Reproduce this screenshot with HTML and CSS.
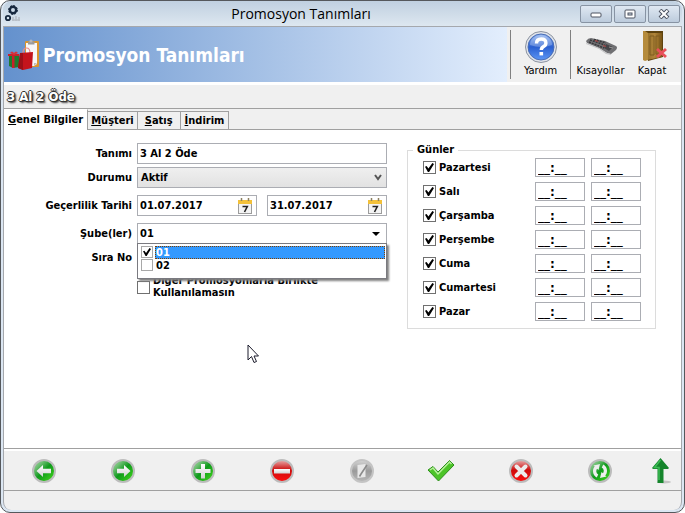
FILE: index.html
```html
<!DOCTYPE html>
<html lang="tr">
<head>
    <meta charset="UTF-8">
    <meta name="viewport" content="width=device-width, initial-scale=1.0">
    <title>Promosyon Tanımları</title>
    <link rel="stylesheet" href="styles.css">
</head>
<body>
    <svg class="defs" width="0" height="0" aria-hidden="true">
        <defs>
            <linearGradient id="green" x1="0" y1="0" x2="1" y2="1">
                <stop offset="0" stop-color="#b4dcb4"/>
                <stop offset="0.25" stop-color="#6fbf74"/>
                <stop offset="0.5" stop-color="#0f9a1c"/>
                <stop offset="1" stop-color="#4be01c"/>
            </linearGradient>
            <linearGradient id="red" x1="0" y1="0" x2="0" y2="1">
                <stop offset="0" stop-color="#e8b0b0"/>
                <stop offset="0.45" stop-color="#cc0c0c"/>
                <stop offset="1" stop-color="#ff1010"/>
            </linearGradient>
            <linearGradient id="gray" x1="0" y1="0" x2="0" y2="1">
                <stop offset="0" stop-color="#d6d6d6"/>
                <stop offset="0.5" stop-color="#9a9a9a"/>
                <stop offset="1" stop-color="#b8b8b8"/>
            </linearGradient>
            <linearGradient id="silver" x1="0" y1="0" x2="0" y2="1">
                <stop offset="0" stop-color="#ffffff"/>
                <stop offset="1" stop-color="#d2d2d2"/>
            </linearGradient>
            <linearGradient id="blue" x1="0" y1="0" x2="0" y2="1">
                <stop offset="0" stop-color="#8fb4f0"/>
                <stop offset="0.5" stop-color="#2a5fd0"/>
                <stop offset="1" stop-color="#5c96f5"/>
            </linearGradient>
            <linearGradient id="wood" x1="0" y1="0" x2="1" y2="0">
                <stop offset="0" stop-color="#94702c"/>
                <stop offset="0.5" stop-color="#b08438"/>
                <stop offset="1" stop-color="#7a5515"/>
            </linearGradient>
        </defs>
        <symbol id="calendar" viewBox="0 0 14 16">
            <rect x="0.5" y="2.5" width="13" height="13" fill="#f4f4f4" stroke="#9c9c9c"/>
            <rect x="0" y="2" width="14" height="4" fill="#f3c13a"/>
            <path d="M3.5 0v3M10.5 0v3" stroke="#8d8060" stroke-width="1.5"/>
            <path d="M4.500 8.500h4.800L6.500 14" fill="none" stroke="#222" stroke-width="1.6"/>
        </symbol>
    </svg>

    <div class="window">
        <header class="titlebar">
            <svg class="app-icon" width="18" height="18" viewBox="0 0 18 18">
                <circle cx="9" cy="5" r="3.2" fill="none" stroke="#17283e" stroke-width="2.4"/>
                <circle cx="9" cy="5" r="4.4" fill="none" stroke="#17283e" stroke-width="1" stroke-dasharray="2 1.4"/>
                <circle cx="4" cy="13" r="2.2" fill="none" stroke="#17283e" stroke-width="1.8"/>
                <path d="M8 15h8M9 12v4M12 11v5M15 12v4" stroke="#b8bfc8" stroke-width="1.6"/>
            </svg>
            <h1>Promosyon Tanımları</h1>
            <div class="window-buttons">
                <button type="button" aria-label="Simge durumuna küçült">
                    <svg width="12" height="10" viewBox="0 0 12 10"><rect x="1" y="4" width="10" height="4" rx="1" fill="#fff" stroke="#4c5260"/></svg>
                </button>
                <button type="button" aria-label="Ekranı kapla">
                    <svg width="12" height="10" viewBox="0 0 12 10"><rect x="1" y="1" width="10" height="8" rx="1" fill="#fff" stroke="#4c5260"/><rect x="4" y="4" width="4" height="2" fill="#cfdbe8" stroke="#4c5260"/></svg>
                </button>
                <button type="button" aria-label="Pencereyi kapat">
                    <svg width="12" height="10" viewBox="0 0 12 10"><path d="M2 1l8 8M10 1L2 9" stroke="#4c5260" stroke-width="4"/><path d="M2.5 1.5l7 7M9.5 1.5l-7 7" stroke="#fff" stroke-width="2"/></svg>
                </button>
            </div>
        </header>

        <div class="client">
            <div class="banner">
                <div class="banner-title">
                    <svg width="32" height="32" viewBox="0 0 32 32">
                        <rect x="17" y="2" width="14" height="26" rx="1" fill="#d9962f"/>
                        <path d="M18 4h11v21l-3 2h-8z" fill="#f7f7f7"/>
                        <path d="M26 27l3-3h-3z" fill="#bdbdbd"/>
                        <path d="M20 2.500h6.500v3h-6.500z" fill="#9a9a9a"/>
                        <circle cx="23" cy="2" r="1.6" fill="#b5b5b5"/>
                        <path d="M1 16l4-1 6 1v12l-6 1-4-2z" fill="#1f7a2e"/>
                        <path d="M0 15h11v2H0zM4 15h2.500v14H4z" fill="#c8202a"/>
                        <path d="M2 14q2-3 4 0q2-3 4 0l-4 2z" fill="#d8323a"/>
                        <path d="M15 14q0-5 3.500-5t3.500 5" fill="none" stroke="#e88a8a" stroke-width="1.2"/>
                        <path d="M12 14l13-1-1 16-9 2-5-2z" fill="#c4141c"/>
                        <path d="M12 14l3 0 0 17-5-2z" fill="#9c1018"/>
                    </svg>
                    <h2>Promosyon Tanımları</h2>
                </div>
                <div class="banner-actions">
                    <button type="button" class="action action-help">
                        <svg width="34" height="34" viewBox="0 0 34 34">
                            <circle cx="17" cy="17" r="15.5" fill="#dfe3ea" stroke="#8c93a0"/>
                            <circle cx="17" cy="17" r="13" fill="url(#blue)" stroke="#4a6db5"/>
                            <path d="M6 15a11 10 0 0 1 22 0q-11 4-22 0z" fill="#fff" opacity="0.25"/>
                            <path d="M12.5 13.5q0-4.5 4.700-4.500t4.700 4q0 2.300-2.300 3.600t-2.300 3.400" fill="none" stroke="#fff" stroke-width="3.4"/>
                            <rect x="15.5" y="22" width="3.6" height="3.4" fill="#fff"/>
                        </svg>
                        <span>Yardım</span>
                    </button>
                    <button type="button" class="action action-keys">
                        <svg width="34" height="34" viewBox="0 0 34 34">
                            <path d="M2 11q2-3 5-3l14 3 11 5q2 1 0 4l-5 4-4-1-8-5-12-5z" fill="#707073"/>
                            <path d="M2 13l13 5 8 5 4 1 0 1-5-1-7-5-13-5z" fill="#c6c6c8"/>
                            <path d="M6 10l15 5M5 12l15 6M10 9.500l12 3.500" stroke="#38383b" stroke-width="1.5" stroke-dasharray="2 1"/>
                            <path d="M22 14l7 3-4 4-5-3z" fill="#444448"/>
                            <path d="M11 10.500l3 1M19 15.500l3 1" stroke="#a84040" stroke-width="1.2"/>
                            <path d="M25 17l4 1" stroke="#999" stroke-width="1"/>
                        </svg>
                        <span>Kısayollar</span>
                    </button>
                    <button type="button" class="action action-close">
                        <svg width="34" height="34" viewBox="0 0 34 34">
                            <path d="M9 1h19v26l-15 4z" fill="#5e430f"/>
                            <path d="M12 3h15v24l-15 3z" fill="url(#wood)"/>
                            <path d="M8 1h2l3 2v27l-3 1-2-1z" fill="#b58b3c"/>
                            <path d="M15 6h4v19h-4zM21 6h4v18h-4z" fill="none" stroke="#7e5d20"/>
                            <path d="M22 19l9 8M31 19l-9 8" stroke="#e8505a" stroke-width="3"/>
                        </svg>
                        <span>Kapat</span>
                    </button>
                </div>
            </div>

            <div class="record-name">3 Al 2 Öde</div>

            <div class="tabs" role="tablist">
                <button type="button" class="tab active" role="tab" aria-selected="true"><u>G</u>enel Bilgiler</button>
                <button type="button" class="tab" role="tab"><u>M</u>üşteri</button>
                <button type="button" class="tab tab-wide" role="tab"><u>S</u>atış</button>
                <button type="button" class="tab tab-last" role="tab"><u>İ</u>ndirim</button>
            </div>

            <main class="panel">
                <form class="details">
                    <div class="row">
                        <label for="tanim">Tanımı</label>
                        <input class="field" id="tanim" type="text" value="3 Al 2 Öde">
                    </div>
                    <div class="row">
                        <label for="durum">Durumu</label>
                        <div class="select-box">
                            <select class="field" id="durum"><option>Aktif</option><option>Pasif</option></select>
                            <svg class="chevron" width="8" height="7" viewBox="0 0 8 7"><path d="M1 1l3 4 3-4" fill="none" stroke="#555" stroke-width="2"/></svg>
                        </div>
                    </div>
                    <div class="row spaced">
                        <label for="baslangic">Geçerlilik Tarihi</label>
                        <div class="dates">
                            <div class="field combo">
                                <input id="baslangic" type="text" value="01.07.2017">
                                <button type="button" aria-label="Başlangıç tarihi seç"><svg width="14" height="16"><use href="#calendar"/></svg></button>
                            </div>
                            <div class="field combo">
                                <input type="text" value="31.07.2017" aria-label="Bitiş tarihi">
                                <button type="button" aria-label="Bitiş tarihi seç"><svg width="14" height="16"><use href="#calendar"/></svg></button>
                            </div>
                        </div>
                    </div>
                    <div class="row spaced">
                        <label for="sube">Şube(ler)</label>
                        <div class="branch">
                            <div class="field combo">
                                <input id="sube" type="text" value="01" readonly>
                                <button type="button" aria-label="Şubeleri göster"><svg width="12" height="6" viewBox="0 0 12 6"><path d="M2 1h8L6 5z" fill="#000"/></svg></button>
                            </div>
                            <div class="dropdown">
                                <label class="option selected"><input type="checkbox" checked><span>01</span></label>
                                <label class="option"><input type="checkbox"><span>02</span></label>
                            </div>
                        </div>
                    </div>
                    <div class="row">
                        <label for="sira">Sıra No</label>
                        <input class="field" id="sira" type="text">
                    </div>
                    <div class="row spaced">
                        <label class="exclusive"><input type="checkbox"><span>Diğer Promosyonlarla Birlikte Kullanılamasın</span></label>
                    </div>
                </form>

                <fieldset class="days">
                    <legend>Günler</legend>
                    <div class="day"><label><input type="checkbox" checked>Pazartesi</label><input type="text" class="time" value="__:__" aria-label="Pazartesi başlangıç"><input type="text" class="time" value="__:__" aria-label="Pazartesi bitiş"></div>
                    <div class="day"><label><input type="checkbox" checked>Salı</label><input type="text" class="time" value="__:__" aria-label="Salı başlangıç"><input type="text" class="time" value="__:__" aria-label="Salı bitiş"></div>
                    <div class="day"><label><input type="checkbox" checked>Çarşamba</label><input type="text" class="time" value="__:__" aria-label="Çarşamba başlangıç"><input type="text" class="time" value="__:__" aria-label="Çarşamba bitiş"></div>
                    <div class="day"><label><input type="checkbox" checked>Perşembe</label><input type="text" class="time" value="__:__" aria-label="Perşembe başlangıç"><input type="text" class="time" value="__:__" aria-label="Perşembe bitiş"></div>
                    <div class="day"><label><input type="checkbox" checked>Cuma</label><input type="text" class="time" value="__:__" aria-label="Cuma başlangıç"><input type="text" class="time" value="__:__" aria-label="Cuma bitiş"></div>
                    <div class="day"><label><input type="checkbox" checked>Cumartesi</label><input type="text" class="time" value="__:__" aria-label="Cumartesi başlangıç"><input type="text" class="time" value="__:__" aria-label="Cumartesi bitiş"></div>
                    <div class="day"><label><input type="checkbox" checked>Pazar</label><input type="text" class="time" value="__:__" aria-label="Pazar başlangıç"><input type="text" class="time" value="__:__" aria-label="Pazar bitiş"></div>
                </fieldset>

                <svg class="pointer" width="12" height="20" viewBox="0 0 12 20"><path d="M1 1v15l3.500-3.500L7 18.500l2.500-1-2.500-5.500h4.500z" fill="#fff" stroke="#1c1c2c"/></svg>
            </main>

            <nav class="toolbar">
                <button type="button" aria-label="Önceki">
                    <svg width="24" height="24" viewBox="0 0 24 24"><circle cx="12" cy="12" r="11" fill="url(#green)" stroke="#bcbcbc" stroke-width="2"/><path d="M4.500 12L11 6v3.700h8v4.600h-8V18z" fill="url(#silver)"/></svg>
                </button>
                <button type="button" aria-label="Sonraki">
                    <svg width="24" height="24" viewBox="0 0 24 24"><circle cx="12" cy="12" r="11" fill="url(#green)" stroke="#bcbcbc" stroke-width="2"/><path d="M19.500 12L13 6v3.700H6v4.600h7V18z" fill="url(#silver)"/></svg>
                </button>
                <button type="button" aria-label="Ekle">
                    <svg width="24" height="24" viewBox="0 0 24 24"><circle cx="12" cy="12" r="11" fill="url(#green)" stroke="#bcbcbc" stroke-width="2"/><path d="M10 5h4v5h5.500v4H14v5.500h-4V14H4.500v-4H10z" fill="url(#silver)"/></svg>
                </button>
                <button type="button" aria-label="Sil">
                    <svg width="24" height="24" viewBox="0 0 24 24"><circle cx="12" cy="12" r="11" fill="url(#red)" stroke="#bcbcbc" stroke-width="2"/><rect x="4" y="10" width="16" height="4.500" fill="url(#silver)"/></svg>
                </button>
                <button type="button" aria-label="Düzenle" disabled>
                    <svg width="24" height="24" viewBox="0 0 24 24"><circle cx="12" cy="12" r="11" fill="url(#gray)" stroke="#c4c4c4" stroke-width="2"/><path d="M7.500 6l8-1v13l-8 1z" fill="#e8e8e8"/><path d="M17 6l-6 9-1.500 2.500" fill="none" stroke="#8a8a8a" stroke-width="1.6"/></svg>
                </button>
                <button type="button" aria-label="Kaydet">
                    <svg width="28" height="24" viewBox="0 0 28 24"><path d="M1 11l5-3.500 5 5.500L22.500 1.500 27 6 11.500 22z" fill="#4cc428" stroke="#2c8e1c"/><path d="M3 11l3-2 5 6L22.500 3l2 2" fill="none" stroke="#b8f09c" stroke-width="1.5"/></svg>
                </button>
                <button type="button" aria-label="İptal">
                    <svg width="24" height="24" viewBox="0 0 24 24"><circle cx="12" cy="12" r="11" fill="url(#red)" stroke="#bcbcbc" stroke-width="2"/><path d="M7.500 7.500l9 9M16.500 7.500l-9 9" stroke="#ececec" stroke-width="4" stroke-linecap="round"/></svg>
                </button>
                <button type="button" aria-label="Yenile">
                    <svg width="24" height="24" viewBox="0 0 24 24"><circle cx="12" cy="12" r="11" fill="url(#green)" stroke="#bcbcbc" stroke-width="2"/><path d="M9.500 17a5.500 5.500 0 0 1-1-9M14.500 7a5.500 5.500 0 0 1 1 9" fill="none" stroke="#eee" stroke-width="3.2"/><path d="M5.500 6.500L12 5l-1.500 6zM18.500 17.500L12 19l1.500-6z" fill="#eee"/></svg>
                </button>
                <button type="button" class="exit" aria-label="Çıkış">
                    <svg width="20" height="28" viewBox="0 0 20 28"><ellipse cx="13" cy="25" rx="7" ry="1.5" fill="#c4c4c4"/><path d="M9.500 1l8.500 10-1 1h-4.500V26h-6V12H2L1 11z" fill="#15852c"/><path d="M9.500 3l-6 7.500h4.500V23" fill="none" stroke="#3cbc54" stroke-width="1.5"/></svg>
                </button>
            </nav>

            <footer class="statusbar"></footer>
        </div>
    </div>
</body>
</html>
```
FILE: styles.css
```css
* {
    margin: 0;
    padding: 0;
    box-sizing: border-box;
}

body {
    font-family: "DejaVu Sans Condensed", "DejaVu Sans", sans-serif;
    font-size: 11px;
    font-weight: bold;
    color: #000;
    background: #fff;
}

button, input, select {
    font: inherit;
    color: inherit;
}

button {
    border: none;
    background: none;
}

.defs {
    position: absolute;
}

.window {
    display: flex;
    flex-direction: column;
    min-height: 100vh;
    padding: 0 2px 2px;
    border: 1px solid #55585c;
    border-radius: 10px;
    background: #dbe6f2;
}

/* title bar */
.titlebar {
    display: flex;
    align-items: center;
    height: 25px;
    background: linear-gradient(#c0d0e0, #dde7f0);
    border-radius: 9px 9px 0 0;
}

.app-icon {
    margin-left: 1px;
}

.titlebar h1 {
    flex: 1;
    text-align: center;
    font-family: "Open Sans", sans-serif;
    font-size: 14px;
    font-weight: normal;
}

.window-buttons {
    display: flex;
    gap: 2px;
    padding-right: 2px;
}

.window-buttons button {
    display: flex;
    align-items: center;
    justify-content: center;
    width: 32px;
    height: 18px;
    border: 1px solid #8793a3;
    border-radius: 2px;
    background: linear-gradient(#dfe8f2, #bccbdc);
}

.client {
    flex: 1;
    display: flex;
    flex-direction: column;
    border: 1px solid #a5a8ad;
    border-bottom: none;
    border-radius: 0 0 8px 8px;
    background: #f0f0f0;
}

/* banner */
.banner {
    display: flex;
    height: 58px;
    background: #f0f0f0;
    border-bottom: 3px solid #fff;
}

.banner-title {
    flex: 1;
    display: flex;
    align-items: center;
    gap: 3px;
    padding-left: 4px;
    background: linear-gradient(90deg, #6491cd, #e3eefd);
}

.banner-title h2 {
    font-size: 19px;
    line-height: 24px;
    color: #fff;
}

.banner-actions {
    display: flex;
    padding: 3px 7px 3px 3px;
}

.action {
    display: flex;
    flex-direction: column;
    align-items: center;
    width: 60px;
    border-left: 1px solid #808080;
    line-height: 14px;
    font-weight: normal;
}

.action-close {
    width: 44px;
    border-left: none;
}

/* record name */
.record-name {
    height: 24px;
    padding-left: 3px;
    border-bottom: 1px solid #a0a0a0;
    font-size: 13px;
    line-height: 24px;
    color: #fff;
    text-shadow: 1px 0 #333, -1px 0 #333, 0 1px #333, 0 -1px #333, 1px 1px 2px #000, 2px 2px 2px #666;
}

/* tabs */
.tabs {
    display: flex;
    align-items: flex-end;
    height: 21px;
    border-bottom: 1px solid #a0a0a0;
}

.tab {
    height: 18px;
    padding: 0 3px;
    border: 1px solid #a0a0a0;
    border-width: 1px 1px 0 0;
    line-height: 16px;
}

.tab-wide {
    padding: 0 7px;
}

.tab-last {
    padding: 0 4px;
}

.tab.active {
    height: 21px;
    margin-bottom: -1px;
    padding: 0 4px;
    border-top-color: #fff;
    background: #fff;
}

.panel {
    position: relative;
    flex: 1;
    display: flex;
    align-items: flex-start;
    gap: 20px;
    padding: 13px 25px 20px 0;
    background: #fff;
    border-bottom: 1px solid #a0a0a0;
}

/* general details */
.details {
    flex: 1;
    display: flex;
    flex-direction: column;
    gap: 3px;
    min-width: 0;
}

.row {
    display: grid;
    grid-template-columns: 128px minmax(0, 1fr);
    align-items: center;
    gap: 5px;
}

.row > label:first-child {
    text-align: right;
}

.row > .exclusive:first-child {
    grid-column: 2;
    text-align: left;
}

.spaced {
    margin-top: 4px;
}

.field {
    width: 100%;
    height: 21px;
    padding: 0 2px;
    border: 1px solid #abadb3;
    background: #fff;
}

.select-box {
    position: relative;
}

select.field {
    display: block;
    padding: 0 3px;
    appearance: none;
    background: linear-gradient(#efefef, #e2e2e2);
}

.chevron {
    position: absolute;
    right: 5px;
    top: 7px;
    pointer-events: none;
}

.dates {
    display: grid;
    grid-template-columns: 1fr 1fr;
    gap: 10px;
}

.combo {
    display: flex;
    align-items: center;
    padding-right: 4px;
}

.combo input {
    flex: 1;
    width: 100%;
    min-width: 0;
    border: none;
    background: none;
}

.combo button {
    display: flex;
}

.branch {
    position: relative;
}

.dropdown {
    position: absolute;
    top: 20px;
    left: 0;
    right: 0;
    z-index: 1;
    height: 36px;
    padding: 2px 1px 0 3px;
    border: 1px solid #7a7a80;
    background: #fff;
    box-shadow: 2px 2px 2px #808080;
}

.option {
    display: flex;
    gap: 2px;
    height: 13px;
    line-height: 13px;
}

.option span {
    flex: 1;
    padding-left: 1px;
}

.option.selected span {
    background: #3399ff;
    outline: 1px dotted #804000;
    outline-offset: -1px;
    color: #fff;
}

input[type="checkbox"] {
    appearance: none;
    position: relative;
    flex: none;
    width: 13px;
    height: 13px;
    border: 1px solid #707070;
    background: #fff;
}

.option input[type="checkbox"] {
    width: 12px;
    height: 12px;
    border-color: #a8a8a8;
}

input[type="checkbox"]:checked::before {
    content: "";
    position: absolute;
    inset: 1px;
    background: #000;
    clip-path: polygon(0 42%, 18% 34%, 38% 62%, 82% 0, 100% 12%, 46% 100%, 32% 100%);
}

.exclusive {
    display: flex;
    align-items: center;
    gap: 3px;
    line-height: 12px;
}

.exclusive span {
    max-width: 190px;
}

/* days */
.days {
    flex: none;
    display: flex;
    flex-direction: column;
    gap: 5px;
    width: 249px;
    padding: 1px 14px 7px 15px;
    border: 1px solid #dcdcdc;
}

.days legend {
    margin-left: -10px;
    padding: 0 4px;
    line-height: 14px;
}

.day {
    display: grid;
    grid-template-columns: 1fr 50px 50px;
    gap: 6px;
}

.day label {
    display: flex;
    align-items: center;
    gap: 3px;
}

.time {
    height: 19px;
    padding: 0 2px;
    border: 1px solid #abadb3;
    font-family: "DejaVu Sans", sans-serif;
    font-size: 12px;
}

.pointer {
    position: absolute;
    left: 243px;
    top: 214px;
}

/* toolbar */
.toolbar {
    display: flex;
    height: 42px;
    border-top: 2px solid #fff;
    border-bottom: 1px solid #a0a0a0;
}

.toolbar button {
    flex: 1;
    display: flex;
    align-items: center;
    justify-content: center;
}

.toolbar .exit {
    flex: 0 0 41px;
}

.statusbar {
    height: 19px;
}
```
